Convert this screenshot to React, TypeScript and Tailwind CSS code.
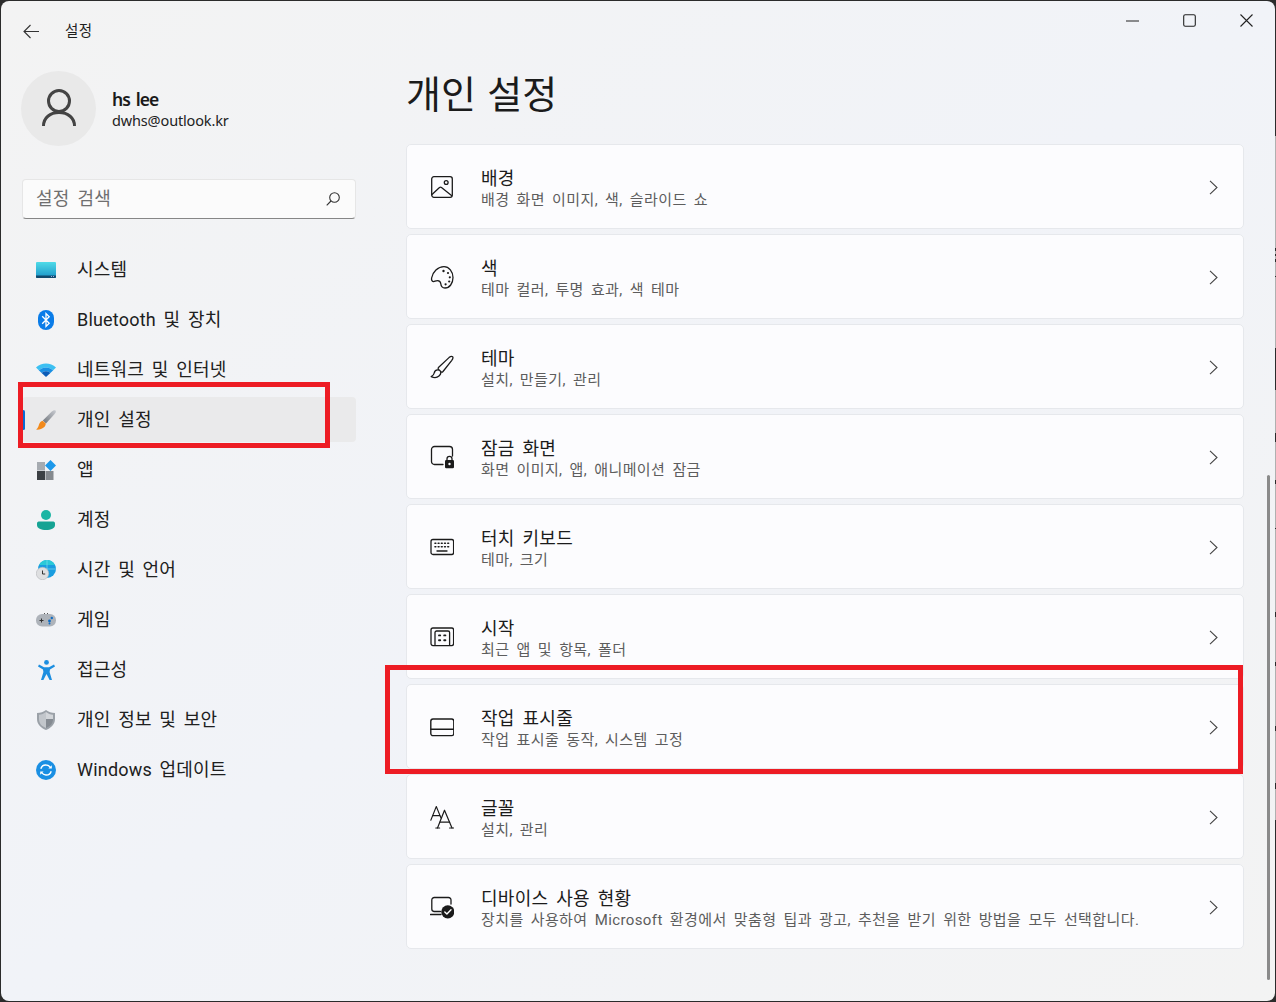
import React from "react";

const kr = "font-['Roboto','Noto_Sans_CJK_KR',sans-serif]";

const I = ({ children, size = 24 }: { children: React.ReactNode; size?: number }) => (
  <svg width={size} height={size} viewBox="0 0 24 24" fill="none" stroke="#1b1b1b" strokeWidth="1.3" strokeLinecap="round" strokeLinejoin="round">
    {children}
  </svg>
);

const cardIcons: Record<string, React.ReactNode> = {
  image: (
    <I>
      <rect x="1.7" y="1.7" width="20.6" height="20.6" rx="2.2" />
      <path d="M2 19.5 9.5 12.5 Q10.5 11.7 11.5 12.5 L21.5 20.5" />
      <circle cx="16.2" cy="7.5" r="1.9" />
    </I>
  ),
  palette: (
    <I>
      <path d="M14 1.6C19 1.6 23 6.5 23 12.5 23 18.5 19.5 23 15 23 12 23 11 21 10.8 18.8 10.6 16.5 9.5 15.6 7.5 15.6 5.5 15.6 4.8 16.6 3.7 16.6 2.2 16.6 1.2 15.2 1.6 13 2.6 7 8 1.6 14 1.6Z" />
      <circle cx="13.5" cy="6" r="1.2" fill="#1b1b1b" stroke="none" />
      <circle cx="18" cy="8" r="1.1" fill="#1b1b1b" stroke="none" />
      <circle cx="19.8" cy="12.3" r="1.1" fill="#1b1b1b" stroke="none" />
      <circle cx="19.2" cy="16.5" r="1.1" fill="#1b1b1b" stroke="none" />
      <circle cx="15.6" cy="19.3" r="1.1" fill="#1b1b1b" stroke="none" />
    </I>
  ),
  brush: (
    <I>
      <path d="M22.6 1.7C23.4 2.5 22.8 4 21.6 5.6L13 16.5C12.4 17.2 11.6 17.2 11 16.7L8.6 14.4C8 13.8 8 13 8.7 12.3L19 2.6C20.4 1.4 21.8 1 22.6 1.7Z" />
      <path d="M8.4 15C6 14.6 4.6 16 4.2 18 3.9 19.8 3 20.8 1.2 21.6 3.6 22.8 7 22.8 9 21 10.6 19.6 11 17.8 10.6 16.8" />
    </I>
  ),
  lock: (
    <I>
      <path d="M13 19.5H4.5A3 3 0 0 1 1.5 16.5V4.5A3 3 0 0 1 4.5 1.5H19.5A3 3 0 0 1 22.5 4.5V11" />
      <rect x="15" y="15" width="9" height="8.2" rx="1.2" fill="#1b1b1b" stroke="none" />
      <path d="M17 15.5V13.8A2.5 2.5 0 0 1 22 13.8V15.5" />
      <circle cx="19.5" cy="19" r="1.2" fill="#fcfcfe" stroke="none" />
    </I>
  ),
  keyboard: (
    <I>
      <rect x="1" y="4.5" width="22.6" height="15" rx="2" strokeWidth="1.3" />
      <path d="M7 16h10" strokeWidth="1.3" />
      <path d="M5 8.2h.8M8.2 8.2H9M11.4 8.2h.8M14.6 8.2h.8M17.8 8.2h.8M5 11.8h.8M8.2 11.8H9M11.4 11.8h.8M14.6 11.8h.8M17.8 11.8h.8" strokeWidth="1.6" />
    </I>
  ),
  start: (
    <I>
      <rect x="1" y="3" width="22.6" height="17.6" rx="2" />
      <path d="M5 19.8V7.6A1.6 1.6 0 0 1 6.6 6H18A1.6 1.6 0 0 1 19.6 7.6V19.8" />
      <path d="M9 10.4h1.2M14.2 10.4h1.2M9 15.2h1.2M14.2 15.2h1.2" strokeWidth="1.9" />
    </I>
  ),
  taskbar: (
    <I>
      <rect x=".8" y="4" width="23" height="16.6" rx="2.2" strokeWidth="1.4" />
      <path d="M1 14.2H23.6" strokeWidth="1.4" />
    </I>
  ),
  font: (
    <I>
      <path d="M.8 15.2 6.3 1.5 11 13" strokeWidth="1.1" />
      <path d="M2.8 10.6H9.8" strokeWidth="1.1" />
      <path d="M7.5 23 14.5 5.2 22 23" strokeWidth="1.2" />
      <path d="M10 17.2H19.6M5.8 23H9.6M19.6 23H24" strokeWidth="1.2" />
    </I>
  ),
  device: (
    <I>
      <path d="M10.5 16.5H4A2.5 2.5 0 0 1 1.8 14V5A2.5 2.5 0 0 1 4.3 2.5H18.5A2.5 2.5 0 0 1 21 5V9" />
      <path d="M.5 19.5H11" />
      <circle cx="17.8" cy="16.8" r="6.6" fill="#1b1b1b" stroke="none" />
      <path d="M14.8 17 16.9 19.1 21 14.8" stroke="#fff" strokeWidth="1.4" />
    </I>
  ),
};

const cards = [
  ["image", "배경", "배경 화면 이미지, 색, 슬라이드 쇼"],
  ["palette", "색", "테마 컬러, 투명 효과, 색 테마"],
  ["brush", "테마", "설치, 만들기, 관리"],
  ["lock", "잠금 화면", "화면 이미지, 앱, 애니메이션 잠금"],
  ["keyboard", "터치 키보드", "테마, 크기"],
  ["start", "시작", "최근 앱 및 항목, 폴더"],
  ["taskbar", "작업 표시줄", "작업 표시줄 동작, 시스템 고정"],
  ["font", "글꼴", "설치, 관리"],
  ["device", "디바이스 사용 현황", "장치를 사용하여 Microsoft 환경에서 맞춤형 팁과 광고, 추천을 받기 위한 방법을 모두 선택합니다."],
];

const Nav = {
  system: (
    <svg width="20" height="16" viewBox="0 0 20 16">
      <defs><linearGradient id="s1" x1="0" y1="0" x2="0" y2="1"><stop offset="0" stopColor="#4fdbe8" /><stop offset="1" stopColor="#1a94c8" /></linearGradient></defs>
      <rect width="20" height="16" rx="1" fill="url(#s1)" />
      <path d="M0 13.5H20V15a1 1 0 0 1-1 1H1a1 1 0 0 1-1-1Z" fill="#114a6e" />
      <path d="M15 14.5h1M17 14.5h1" stroke="#9ad" strokeWidth="1" />
    </svg>
  ),
  bt: (
    <svg width="16" height="20" viewBox="0 0 16 20">
      <rect width="16" height="20" rx="8" fill="#0a7ce8" />
      <path d="M4.2 6.3 11.2 13.2 8 16.4V3.6L11.2 6.8 4.2 13.7" fill="none" stroke="#fff" strokeWidth="1.3" />
    </svg>
  ),
  wifi: (
    <svg width="20" height="15" viewBox="0 0 20 15">
      <path d="M0 5.5C5.5 0 14.5 0 20 5.5L17.2 8.3C13 4.4 7 4.4 2.8 8.3Z" fill="#3cc0f2" />
      <path d="M2.8 8.3C7 4.4 13 4.4 17.2 8.3L14.4 11C11.8 8.6 8.2 8.6 5.6 11Z" fill="#1a8fe3" />
      <path d="M5.6 11C8.2 8.6 11.8 8.6 14.4 11L10 15Z" fill="#0b5cb8" />
    </svg>
  ),
  paint: (
    <svg width="20" height="20" viewBox="0 0 20 20">
      <defs><linearGradient id="p1" x1="1" y1="0" x2="0" y2="1"><stop offset="0" stopColor="#c9ccd2" /><stop offset="1" stopColor="#6d7278" /></linearGradient></defs>
      <path d="M19.5.5C20.3 1.3 19.8 2.4 18.6 4L10 13.5 6.8 10.6 15.8 1.6C17.4.3 18.7-.2 19.5.5Z" fill="url(#p1)" />
      <path d="M6.6 10.8 9.8 13.6C9.6 16.6 7 20 0 19.6 2 18.4 2.4 16.6 3 14.6 3.6 12.6 5 11 6.6 10.8Z" fill="#f28a1c" />
    </svg>
  ),
  apps: (
    <svg width="19" height="20" viewBox="0 0 19 20">
      <rect x="0" y="2" width="8" height="8.5" fill="#a6abb1" />
      <rect x="0" y="11" width="8" height="9" fill="#3c4044" />
      <rect x="8.5" y="11" width="8" height="9" fill="#85898e" />
      <path d="M13.5 0 19 5.5 13.5 11 8 5.5Z" fill="#1c98ea" />
    </svg>
  ),
  account: (
    <svg width="18" height="20" viewBox="0 0 18 20">
      <circle cx="9" cy="5" r="5" fill="#1cb5a3" />
      <path d="M0 13.5C0 12 1 11.5 2.5 11.5H15.5C17 11.5 18 12 18 13.5V15C18 18.5 14 20 9 20S0 18.5 0 15Z" fill="#15a394" />
    </svg>
  ),
  time: (
    <svg width="20" height="20" viewBox="0 0 20 20">
      <circle cx="11" cy="9" r="9" fill="#1a9de0" />
      <path d="M11 0A9 9 0 0 0 3 5H19A9 9 0 0 0 11 0Z" fill="#2bc9d8" />
      <path d="M11 0V18M2 9H20" stroke="#7fd8ee" strokeWidth=".7" />
      <circle cx="6.5" cy="13.5" r="6.2" fill="#dedfe1" stroke="#b5b7ba" strokeWidth=".6" />
      <path d="M6.5 10.5V14H9.2" fill="none" stroke="#333" strokeWidth="1" />
    </svg>
  ),
  game: (
    <svg width="20" height="14" viewBox="0 0 20 14">
      <rect y="1" width="20" height="12.5" rx="6" fill="#aeb3ba" />
      <path d="M3.5 7.5h4M5.5 5.5v4" stroke="#333" strokeWidth="1" />
      <circle cx="13.5" cy="8" r="1.4" fill="#0f6cc4" />
      <circle cx="15.8" cy="5" r="1.2" fill="#0f6cc4" />
      <circle cx="13.5" cy="10.5" r="1" fill="#0f6cc4" />
      <path d="M8 .5h1M11 .5h1" stroke="#555" strokeWidth="1" />
    </svg>
  ),
  access: (
    <svg width="17" height="20" viewBox="0 0 17 20">
      <circle cx="8.5" cy="2.4" r="2.4" fill="#1c8ee0" />
      <path d="M1 4.6 6 7.2H11L16 4.6 17 6.4 12 9.6 11.6 12 14 20H11.6L8.5 14 5.4 20H3L5.4 12 5 9.6 0 6.4Z" fill="#1c8ee0" />
    </svg>
  ),
  shield: (
    <svg width="18" height="20" viewBox="0 0 18 20">
      <path d="M9 0C11.5 2 14.5 3 18 3V9C18 14.5 14 18 9 20 4 18 0 14.5 0 9V3C3.5 3 6.5 2 9 0Z" fill="#9ba1a8" />
      <path d="M9 2V18C5 16.5 2 13.5 2 9V4.8C4.6 4.6 7 3.6 9 2Z" fill="#c2c6cb" />
      <path d="M9 2C11 3.6 13.4 4.6 16 4.8V9H9Z" fill="#d2d5d9" />
      <path d="M9 9H16C16 13.5 13 16.5 9 18Z" fill="#858b92" />
    </svg>
  ),
  update: (
    <svg width="20" height="20" viewBox="0 0 20 20">
      <circle cx="10" cy="10" r="10" fill="#1a8fe3" />
      <path d="M4.8 8.8C5.6 6.2 8 4.8 10.2 5 12 5.1 13.4 6 14.3 7.3M15.2 11.2C14.4 13.8 12 15.2 9.8 15 8 14.9 6.6 14 5.7 12.7" fill="none" stroke="#fff" strokeWidth="1.4" />
      <path d="M15.8 5.2V8.6H12.4ZM4.2 14.8V11.4H7.6Z" fill="#fff" />
    </svg>
  ),
};

const navItems: [React.ReactNode, string, boolean?][] = [
  [Nav.system, "시스템"],
  [Nav.bt, "Bluetooth 및 장치"],
  [Nav.wifi, "네트워크 및 인터넷"],
  [Nav.paint, "개인 설정", true],
  [Nav.apps, "앱"],
  [Nav.account, "계정"],
  [Nav.time, "시간 및 언어"],
  [Nav.game, "게임"],
  [Nav.access, "접근성"],
  [Nav.shield, "개인 정보 및 보안"],
  [Nav.update, "Windows 업데이트"],
];

const specks: [number, number][] = [
  [248, 3], [254, 2], [259, 3], [276, 1], [348, 42], [433, 9], [480, 4], [528, 1], [612, 5], [662, 4], [726, 5], [783, 6],
];

export default function App() {
  return (
    <div className={`relative w-[1276px] h-[1002px] overflow-hidden bg-[#2b2b2b] pl-px pt-px ${kr}`}>
      <div className="w-[1274px] h-[1000px] rounded-[8px] overflow-hidden flex flex-col bg-gradient-to-br from-[#f3f3f3] via-[#f1f3f8] to-[#f3f3f3]">
        {/* title bar */}
        <div className="h-[61px] shrink-0 flex items-center">
          <svg className="ml-[22px]" width="17" height="15" viewBox="0 0 17 15" fill="none" stroke="#333" strokeWidth="1.1">
            <path d="M16 7.5H1M7.5 1 1 7.5 7.5 14" />
          </svg>
          <span className="ml-[25px] pt-px text-[14.5px] leading-none text-[#1f1f1f] tracking-[.4px]">설정</span>
          <div className="ml-auto flex items-center self-start pt-[13px]">
            <svg width="13" height="2" viewBox="0 0 13 2" className="mr-[44px]"><path d="M0 1H13" stroke="#222" strokeWidth="1.1" /></svg>
            <svg width="13" height="13" viewBox="0 0 13 13" className="mr-[44px]"><rect x=".7" y=".7" width="11.6" height="11.6" rx="1.6" fill="none" stroke="#222" strokeWidth="1.1" /></svg>
            <svg width="13" height="13" viewBox="0 0 13 13" className="mr-[22px]"><path d="M.5.5 12.5 12.5M12.5.5.5 12.5" stroke="#222" strokeWidth="1.1" /></svg>
          </div>
        </div>
        <div className="flex flex-1 min-h-0">
          {/* sidebar */}
          <aside className="w-[405px] shrink-0 pl-[20px] pr-[50px]">
            <div className="flex items-center h-[76px] mt-[8px]">
              <div className="w-[75px] h-[75px] rounded-full bg-[#e9e9e9] flex items-center justify-center">
                <svg width="34" height="38" viewBox="0 0 34 38" fill="none" stroke="#444" strokeWidth="3">
                  <circle cx="17" cy="12" r="10.5" />
                  <path d="M1.5 37C1.5 29 8 23.5 17 23.5S32.5 29 32.5 37" />
                </svg>
              </div>
              <div className="ml-[16px] pb-[1px]">
                <div className="text-[17.5px] leading-[24px] font-semibold text-[#1a1a1a] tracking-[-0.9px] [word-spacing:2px] font-['Noto_Sans']">hs lee</div>
                <div className="text-[14.5px] leading-[18px] text-[#222] tracking-[-0.15px] font-['Noto_Sans']">dwhs@outlook.kr</div>
              </div>
            </div>
            <div className="mt-[33px] ml-px h-[40px] w-[334px] rounded-[4px] bg-[#fbfbfb] border border-[#e6e6e6] border-b-[#868686] flex items-center pl-[13px] pr-[15px]">
              <span className="text-[18px] text-[#6f6f6f] leading-none tracking-[.3px] [word-spacing:3px]">설정 검색</span>
              <svg className="ml-auto" width="14" height="14" viewBox="0 0 14 14" fill="none" stroke="#333" strokeWidth="1.1">
                <circle cx="8.5" cy="5.5" r="4.8" /><path d="M5 9 .7 13.3" />
              </svg>
            </div>
            <nav className="mt-[28px] ml-px w-[334px] flex flex-col gap-[5px]">
              {navItems.map(([icon, label, active]) => (
                <div key={label} className={`relative h-[45px] flex items-center rounded-[4px] ${active ? "bg-[#eaeaeb]" : ""}`}>
                  {active && <span className="absolute left-0 top-[13px] h-[20px] w-[3px] rounded-full bg-[#0a6cd6]" />}
                  <span className="w-[48px] flex justify-center shrink-0">{icon}</span>
                  <span className="ml-[7px] text-[18px] leading-none text-[#202020] tracking-[.2px] [word-spacing:3px]">{label}</span>
                </div>
              ))}
            </nav>
          </aside>
          {/* main */}
          <main className="w-[838px]">
            <h1 className="text-[38px] leading-[60px] h-[60px] mt-[3px] font-normal text-[#1b1b1b] [word-spacing:2px]">개인 설정</h1>
            <div className="mt-[19px] flex flex-col gap-[5px]">
              {cards.map(([icon, title, sub]) => (
                <div key={title} className="h-[85px] rounded-[5px] bg-[#fcfcfe] border border-[#e6e8ec] flex items-center">
                  <span className="w-[74px] pl-[23px] shrink-0 flex">{cardIcons[icon]}</span>
                  <div className="pt-[4px]">
                    <div className="text-[18px] leading-[22px] text-[#1b1b1b] tracking-[.3px] [word-spacing:3px]">{title}</div>
                    <div className="text-[15px] leading-[20px] text-[#5d5d5d] tracking-[.4px] [word-spacing:3px]">{sub}</div>
                  </div>
                  <svg className="ml-auto mr-[25px] mt-px shrink-0" width="9" height="15" viewBox="0 0 9 15" fill="none" stroke="#444" strokeWidth="1.1"><path d="M1 .8 8 7.5 1 14.2" /></svg>
                </div>
              ))}
            </div>
          </main>
        </div>
      </div>
      {/* scrollbar */}
      <div className="absolute left-[1267px] top-[475px] h-[505px] w-[3px] rounded-full bg-[#8a8a8a]" />
      {/* desktop showing past the window's right edge */}
      <div className="absolute left-[1275px] top-[136px] h-[684px] w-px bg-[#b0b0b0]" />
      {specks.map(([y, h]) => (
        <div key={y} className="absolute left-[1275px] w-px bg-[#2b2b2b]" style={{ top: y, height: h }} />
      ))}
      {/* red annotation boxes */}
      <div className="absolute left-[18px] top-[382px] w-[312px] h-[66px] border-[5px] border-[#ed1c24]" />
      <div className="absolute left-[385px] top-[665px] w-[858px] h-[109px] border-[5px] border-[#ed1c24]" />
    </div>
  );
}
